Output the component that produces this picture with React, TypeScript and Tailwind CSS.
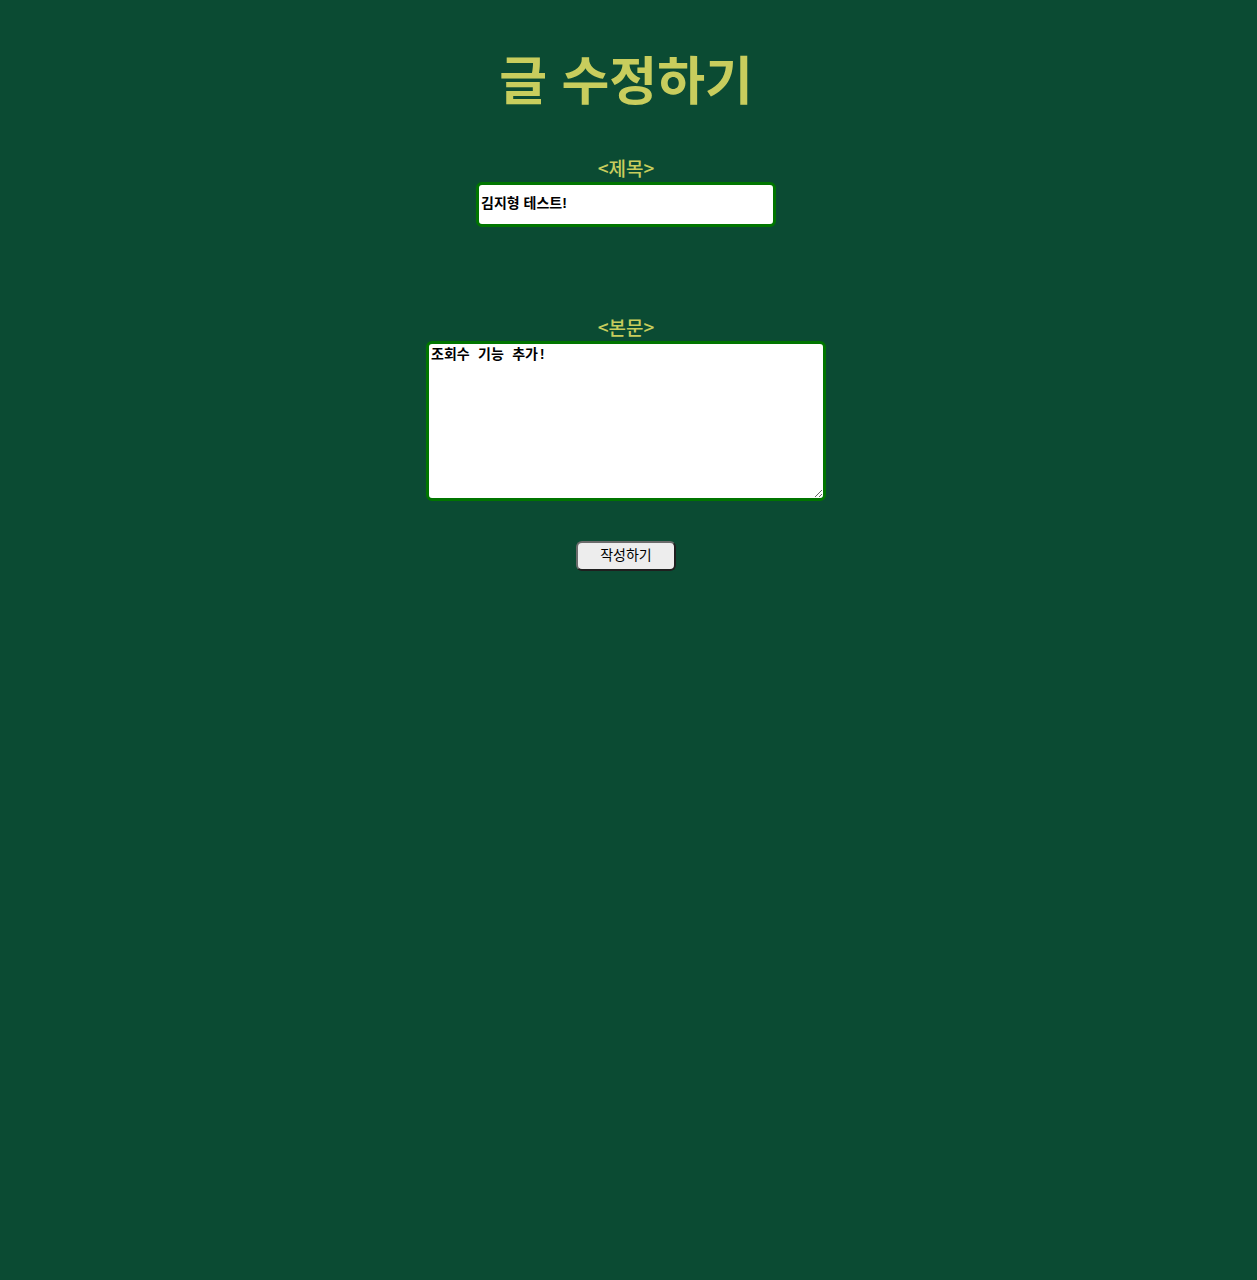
export default function App() {
  return (
    <main className="flex min-h-screen flex-col items-center bg-[#0b4b33] pt-10 pr-[5px] font-['Noto_Sans_CJK_KR',sans-serif]">
      <h1 className="font-['Liberation_Sans','Noto_Sans_CJK_KR',sans-serif] text-[52px] leading-[84px] font-bold text-[#c8cd5d]">글 수정하기</h1>
      <form className="mt-8 flex w-full flex-col items-center" onSubmit={(e) => e.preventDefault()}>
        <label htmlFor="title" className="mb-0.5 text-[19px] leading-[24px] font-medium text-[#c8cd5d]">&lt;제목&gt;</label>
        <input
          id="title"
          type="text"
          defaultValue="김지형 테스트!"
          className="h-[45px] w-[300px] max-w-full rounded-md border-3 border-[#007500] bg-white px-0.5 pb-1.5 font-['Liberation_Sans','Noto_Sans_CJK_KR',sans-serif] text-[14px] font-bold text-black outline-none"
        />
        <label htmlFor="content" className="mt-22 mb-0.5 text-[19px] leading-[24px] font-medium text-[#c8cd5d]">&lt;본문&gt;</label>
        <textarea
          id="content"
          defaultValue="조회수 기능 추가!"
          className="h-40 w-[400px] max-w-full resize rounded-md border-3 border-[#007500] bg-white p-0.5 font-['Liberation_Mono','Noto_Sans_CJK_KR',monospace] text-[14px] leading-[18px] font-bold text-black outline-none"
        />
        <button type="submit" className="mt-10 h-[30px] w-[100px] rounded-md border-2 border-t-[#6b6b6b] border-r-[#1f1f1f] border-b-[#1f1f1f] border-l-[#6b6b6b] bg-[#ededed] pb-1 text-[14px] leading-[20px] text-black">작성하기</button>
      </form>
    </main>
  );
}
